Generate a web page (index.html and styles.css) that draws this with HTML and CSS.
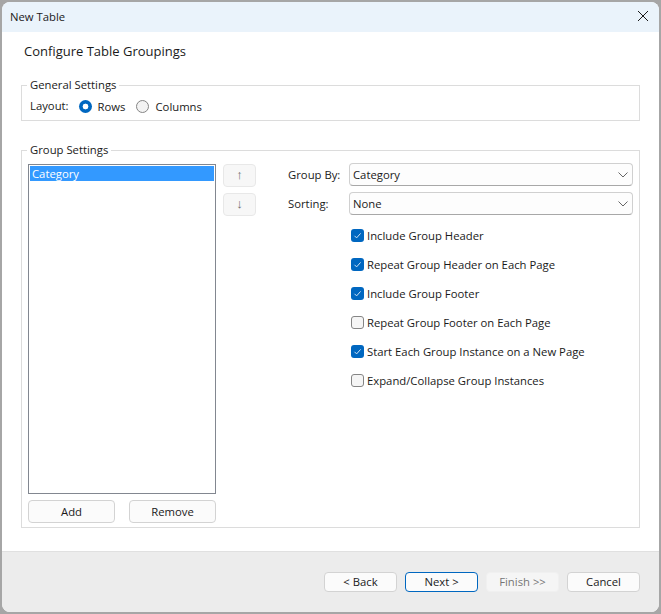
FILE: index.html
```html
<!DOCTYPE html>
<html lang="en">
<head>
    <meta charset="UTF-8">
    <title>New Table</title>
    <link rel="stylesheet" href="styles.css">
</head>
<body>
    <div class="window">
        <div class="titlebar">
            <span class="title">New Table</span>
            <svg class="close" width="12" height="12" viewBox="0 0 12 12"><path d="M1 1 L11 11 M11 1 L1 11" stroke="#1a1a1a" stroke-width="1" fill="none"/></svg>
        </div>

        <div class="content">
            <div class="heading">Configure Table Groupings</div>

            <!-- General settings -->
            <fieldset class="group general">
                <legend>General Settings</legend>
                <div class="layout-row">
                    <span class="layout-label">Layout:</span>
                    <span class="radio checked"></span>
                    <span class="radio-text">Rows</span>
                    <span class="radio"></span>
                    <span class="radio-text">Columns</span>
                </div>
            </fieldset>

            <!-- Group settings -->
            <fieldset class="group settings">
                <legend>Group Settings</legend>
                <div class="settings-body">
                    <div class="list-col">
                        <div class="list">
                            <div class="list-item">Category</div>
                        </div>
                        <div class="list-buttons">
                            <div class="btn">Add</div>
                            <div class="btn">Remove</div>
                        </div>
                    </div>

                    <div class="move-col">
                        <div class="btn-move">↑</div>
                        <div class="btn-move">↓</div>
                    </div>

                    <div class="options-col">
                        <div class="field">
                            <span class="field-label">Group By:</span>
                            <div class="select">
                                <span>Category</span>
                                <svg width="10" height="6" viewBox="0 0 10 6"><path d="M0.5 0.5 L5 5 L9.5 0.5" stroke="#666" stroke-width="1" fill="none"/></svg>
                            </div>
                        </div>
                        <div class="field">
                            <span class="field-label">Sorting:</span>
                            <div class="select">
                                <span>None</span>
                                <svg width="10" height="6" viewBox="0 0 10 6"><path d="M0.5 0.5 L5 5 L9.5 0.5" stroke="#666" stroke-width="1" fill="none"/></svg>
                            </div>
                        </div>

                        <div class="checks">
                            <div class="check-row">
                                <span class="check checked"><svg width="13" height="13" viewBox="0 0 13 13"><path d="M3.5 6.8 L5.6 8.9 L9.6 4.4" stroke="#cfe3f5" stroke-width="1" fill="none"/></svg></span>
                                Include Group Header
                            </div>
                            <div class="check-row">
                                <span class="check checked"><svg width="13" height="13" viewBox="0 0 13 13"><path d="M3.5 6.8 L5.6 8.9 L9.6 4.4" stroke="#cfe3f5" stroke-width="1" fill="none"/></svg></span>
                                Repeat Group Header on Each Page
                            </div>
                            <div class="check-row">
                                <span class="check checked"><svg width="13" height="13" viewBox="0 0 13 13"><path d="M3.5 6.8 L5.6 8.9 L9.6 4.4" stroke="#cfe3f5" stroke-width="1" fill="none"/></svg></span>
                                Include Group Footer
                            </div>
                            <div class="check-row">
                                <span class="check"></span>
                                Repeat Group Footer on Each Page
                            </div>
                            <div class="check-row">
                                <span class="check checked"><svg width="13" height="13" viewBox="0 0 13 13"><path d="M3.5 6.8 L5.6 8.9 L9.6 4.4" stroke="#cfe3f5" stroke-width="1" fill="none"/></svg></span>
                                Start Each Group Instance on a New Page
                            </div>
                            <div class="check-row">
                                <span class="check"></span>
                                Expand/Collapse Group Instances
                            </div>
                        </div>
                    </div>
                </div>
            </fieldset>
        </div>

        <div class="footer">
            <div class="btn btn-nav">&lt; Back</div>
            <div class="btn btn-nav btn-default">Next &gt;</div>
            <div class="btn btn-nav btn-disabled">Finish &gt;&gt;</div>
            <div class="btn btn-nav">Cancel</div>
        </div>
    </div>
</body>
</html>
```

FILE: styles.css
```css
html, body {
    height: 100%;
}

body {
    margin: 0;
    background-color: #a6a6a6;
    font-family: 'Open Sans', 'Noto Sans', sans-serif;
    font-size: 11.3px;
    color: #1a1a1a;
    overflow: hidden;
}

.window {
    box-sizing: border-box;
    width: 657px;
    height: 610px;
    margin: 2px;
    background-color: #ffffff;
    border-radius: 8px;
    display: flex;
    flex-direction: column;
    overflow: hidden;
}

.titlebar {
    box-sizing: border-box;
    height: 30px;
    flex: none;
    background-color: #eaf3fb;
    display: flex;
    align-items: center;
    justify-content: space-between;
    padding: 0 10px 2px 8px;
}

.content {
    flex: 1;
    padding: 0 19px;
}

.heading {
    font-size: 13px;
    line-height: 20px;
    margin: 9px 0 0 3px;
}

.group {
    margin: 0;
    border: 1px solid #dcdcdc;
    padding: 0;
    width: 619px;
    box-sizing: border-box;
}

.group legend {
    margin-left: 5px;
    padding: 0 3px;
    line-height: 16px;
}

.general {
    height: 44px;
    margin-top: 16px;
}

.layout-row {
    display: flex;
    align-items: center;
    height: 17px;
    padding: 5px 0 0 8px;
}

.layout-label {
    margin-right: 10px;
    position: relative;
    top: -1px;
}

.radio {
    box-sizing: border-box;
    width: 13px;
    height: 13px;
    border-radius: 50%;
    border: 1px solid #858585;
    background-color: #f3f3f3;
    margin-right: 6px;
}

.radio.checked {
    border: none;
    background: radial-gradient(circle, #ffffff 0, #ffffff 2.6px, #0067c0 3.2px);
}

.radio-text {
    margin-right: 11px;
}

.settings {
    height: 386px;
    margin-top: 21px;
}

.settings-body {
    display: flex;
    padding-top: 6px;
}

.list-col {
    width: 188px;
    margin-left: 6px;
}

.list {
    box-sizing: border-box;
    height: 330px;
    border: 1px solid #828790;
    padding: 1px;
}

.list-item {
    height: 15px;
    line-height: 15px;
    background-color: #3399ff;
    color: #ffffff;
    padding-left: 2px;
}

.list-buttons {
    display: flex;
    justify-content: space-between;
    margin-top: 6px;
}

.btn {
    box-sizing: border-box;
    width: 87px;
    height: 23px;
    line-height: 21px;
    text-align: center;
    background-color: #fbfbfb;
    border: 1px solid #d3d3d3;
    border-radius: 4px;
}

.move-col {
    width: 33px;
    margin-left: 7px;
}

.btn-move {
    box-sizing: border-box;
    height: 23px;
    margin-bottom: 6px;
    line-height: 20px;
    text-align: center;
    font-family: 'Liberation Sans', sans-serif;
    font-size: 13px;
    color: #707070;
    background-color: #f7f7f7;
    border: 1px solid #e8e8e8;
    border-radius: 4px;
}

.options-col {
    margin-left: 32px;
    width: 345px;
    margin-top: -1px;
}

.field {
    display: flex;
    align-items: center;
    height: 23px;
    margin-bottom: 6px;
}

.field-label {
    width: 61px;
}

.select {
    box-sizing: border-box;
    width: 284px;
    height: 23px;
    background-color: #fdfdfd;
    border: 1px solid #d0d0d0;
    border-bottom-color: #a8a8a8;
    border-radius: 4px;
    display: flex;
    align-items: center;
    justify-content: space-between;
    padding: 0 4px 0 3px;
}

.checks {
    margin-top: 6px;
    padding-left: 63px;
}

.check-row {
    display: flex;
    align-items: center;
    gap: 3px;
    height: 29px;
}

.check {
    box-sizing: border-box;
    width: 13px;
    height: 13px;
    border-radius: 3px;
    border: 1px solid #858585;
    background-color: #f5f5f5;
    display: block;
}

.check.checked {
    border: none;
    background-color: #0067c0;
}

.check svg {
    display: block;
}

.footer {
    height: 61px;
    flex: none;
    box-sizing: border-box;
    background-color: #ececec;
    border-top: 1px solid #e0e0e0;
    display: flex;
    justify-content: flex-end;
    gap: 8px;
    padding: 20px 19px 0 0;
}

.btn-nav {
    width: 73px;
    height: 20px;
    line-height: 18px;
}

.btn-default {
    border-color: #0067c0;
}

.btn-disabled {
    background-color: #f5f5f5;
    border-color: #f0f0f0;
    color: #757575;
}
```
